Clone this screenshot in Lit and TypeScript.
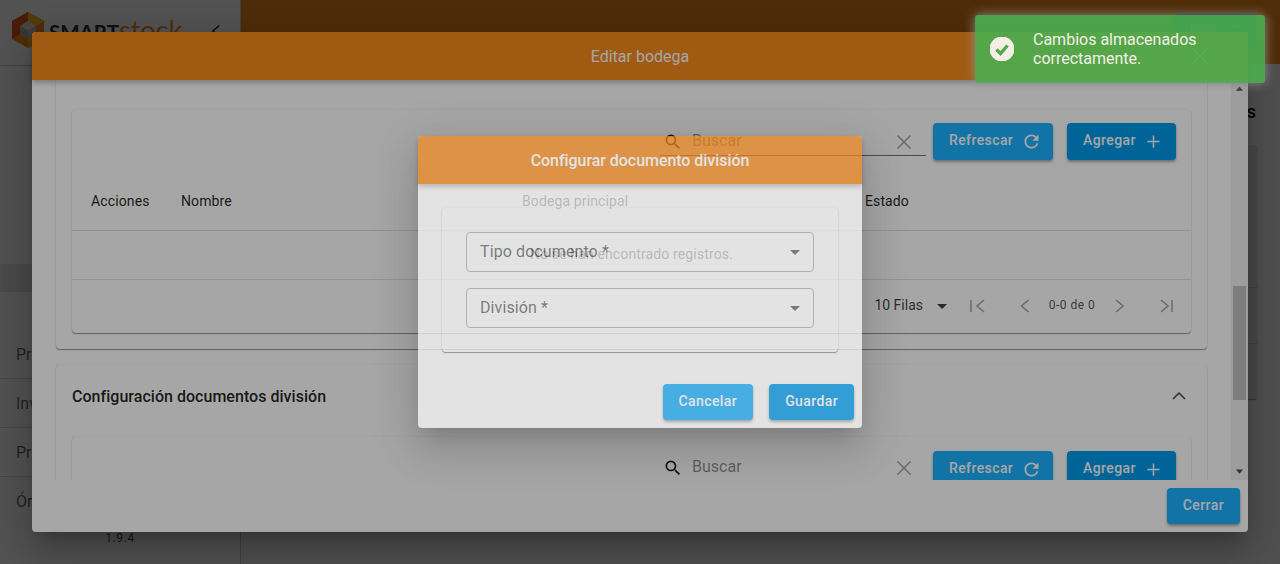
import { LitElement, html, css, svg } from 'lit';
import { customElement } from 'lit/decorators.js';

const icon = (body: unknown, size = 24, cls = '') => html`
  <svg class="icon ${cls}" width=${size} height=${size} viewBox="0 0 24 24">${body}</svg>
`;

const searchIcon = svg`<path fill="currentColor" d="M15.5 14h-.79l-.28-.27A6.471 6.471 0 0 0 16 9.5 6.5 6.5 0 1 0 9.5 16c1.61 0 3.09-.59 4.23-1.57l.27.28v.79l5 4.99L20.49 19l-4.99-5zm-6 0C7.01 14 5 11.99 5 9.5S7.01 5 9.5 5 14 7.01 14 9.5 11.99 14 9.5 14z"/>`;
const closeIcon = svg`<path fill="none" stroke="currentColor" stroke-width="1.3" d="M5.5 5.5l13 13M18.5 5.5l-13 13"/>`;
const refreshIcon = svg`<path fill="currentColor" d="M17.65 6.35A7.958 7.958 0 0 0 12 4c-4.42 0-7.99 3.58-7.99 8s3.57 8 7.99 8c3.73 0 6.84-2.55 7.73-6h-2.08A5.99 5.99 0 0 1 12 18c-3.31 0-6-2.69-6-6s2.69-6 6-6c1.66 0 3.14.69 4.22 1.78L13 11h7V4l-2.35 2.35z"/>`;
const plusIcon = svg`<path fill="none" stroke="currentColor" stroke-width="1.7" d="M12 5v14M5 12h14"/>`;
const firstIcon = svg`<path fill="none" stroke="currentColor" stroke-width="1.6" d="M6 6v12M19 6l-7 6 7 6"/>`;
const prevIcon = svg`<path fill="none" stroke="currentColor" stroke-width="1.6" d="M15.5 6l-7 6 7 6"/>`;
const nextIcon = svg`<path fill="none" stroke="currentColor" stroke-width="1.6" d="M9 6l7 6-7 6"/>`;
const lastIcon = svg`<path fill="none" stroke="currentColor" stroke-width="1.6" d="M17 6v12M6 6l7 6-7 6"/>`;
const chevronUp = svg`<path fill="none" stroke="currentColor" stroke-width="1.5" d="M6 15l6-6 6 6"/>`;
const caretDown = svg`<path fill="currentColor" d="M7 10l5 5 5-5z"/>`;

@customElement('app-root')
export class AppRoot extends LitElement {
  static styles = css`
    :host {
      display: block;
      position: relative;
      width: 1280px;
      height: 564px;
      overflow: hidden;
      font-family: 'Roboto', sans-serif;
      color: rgba(0, 0, 0, 0.87);
    }

    .icon {
      display: block;
      flex: none;
    }

    /* page behind the dialogs */
    .page {
      display: grid;
      grid-template-columns: 241px 1fr;
      height: 564px;
    }

    .sidebar {
      display: flex;
      flex-direction: column;
      background: #fff;
      border-right: 1px solid #ccc;
    }

    .brand {
      height: 66px;
      flex: none;
      box-sizing: border-box;
      padding: 12px 13px 0 12px;
      display: flex;
      gap: 5px;
      border-bottom: 1px solid #ccc;
      overflow: hidden;
    }

    .brand-text {
      font-family: 'Lato', sans-serif;
      font-size: 20.5px;
      font-weight: 700;
      line-height: 36px;
      color: #333;
      white-space: nowrap;
    }

    .brand-text span {
      font-size: 27px;
      font-weight: 400;
      color: #f68a1c;
    }

    .brand-chevron {
      margin: 8px 0 0 auto;
      color: #222;
    }

    .band {
      height: 28px;
      margin-top: 198px;
      background: #e6e6e6;
    }

    .menu {
      margin: 38px 0 0;
      list-style: none;
      padding: 0;
    }

    .menu li {
      height: 49px;
      box-sizing: border-box;
      padding: 0 16px;
      display: flex;
      align-items: center;
      font-size: 16px;
      color: rgba(0, 0, 0, 0.6);
      border-bottom: 1px solid #ddd;
    }

    .menu li:last-child {
      border-bottom: none;
    }

    .version {
      margin-top: 5px;
      text-align: center;
      font-size: 12px;
      letter-spacing: 0.6px;
      color: rgba(0, 0, 0, 0.75);
    }

    .main {
      background: #f8f8f8;
      display: flex;
      flex-direction: column;
    }

    .topbar {
      height: 64px;
      flex: none;
      background: #f68a1c;
      display: flex;
      justify-content: flex-end;
      box-sizing: border-box;
      padding: 14px 24px 0 0;
    }

    .account {
      width: 81px;
      height: 36px;
      box-sizing: border-box;
      padding: 10px 16px;
      display: flex;
      justify-content: space-between;
      border-radius: 4px;
      background: #009aeb;
    }

    .account i {
      width: 24px;
      height: 8px;
      background: #c8c8c8;
    }

    .account b {
      width: 8px;
      height: 4px;
      background: #c8c8c8;
    }

    .page-title {
      margin: 37px 24px 0 0;
      text-align: right;
      font-size: 18px;
      line-height: 22px;
      font-weight: 500;
      color: #000;
    }

    .page-card {
      margin: 22px 22px 0 18px;
      height: 254px;
      display: flex;
      flex-direction: column;
      justify-content: flex-end;
      background: #e4e4e4;
      border-radius: 4px;
      box-shadow: 0 2px 1px -1px rgba(0, 0, 0, 0.4);
    }

    .page-card div {
      height: 55px;
      border-top: 1px solid #c8c8c8;
    }

    /* dialogs */
    .backdrop {
      position: absolute;
      inset: 0;
      background: rgba(0, 0, 0, 0.5);
    }

    .backdrop.upper {
      background: rgba(0, 0, 0, 0.35);
    }

    .dialog {
      position: absolute;
      isolation: isolate;
      display: flex;
      flex-direction: column;
      background: #fff;
      border-radius: 4px;
      box-shadow: 0 11px 15px -7px rgba(0, 0, 0, 0.2),
        0 24px 38px 3px rgba(0, 0, 0, 0.14),
        0 9px 46px 8px rgba(0, 0, 0, 0.12);
    }

    .edit {
      left: 32px;
      top: 32px;
      width: 1216px;
      height: 500px;
    }

    .config {
      left: 418px;
      top: 136px;
      width: 444px;
      height: 292px;
      opacity: 0.69;
    }

    .dialog-head {
      position: relative;
      z-index: 1;
      height: 48px;
      flex: none;
      display: flex;
      align-items: center;
      justify-content: center;
      background: #f68a1c;
      color: #fff;
      font-size: 16px;
      border-radius: 4px 4px 0 0;
      box-shadow: 0 3px 5px rgba(0, 0, 0, 0.25);
    }

    .config .dialog-head {
      font-weight: 500;
      letter-spacing: -0.05px;
    }

    .dialog-close {
      position: absolute;
      right: 36px;
      top: 12px;
      color: #fff;
    }

    .dialog-body {
      flex: 1;
      min-height: 0;
      display: flex;
      overflow: hidden;
    }

    .scroll-content {
      flex: 1;
      min-width: 0;
      box-sizing: border-box;
      padding: 0 24px;
    }

    .scrollbar {
      width: 17px;
      flex: none;
      display: flex;
      flex-direction: column;
      align-items: center;
      background: #f1f1f1;
      color: #505050;
    }

    .scrollbar .track {
      flex: 1;
      width: 100%;
      box-sizing: border-box;
      padding: 189px 2px 0 2px;
    }

    .scrollbar .thumb {
      height: 114px;
      background: #c1c1c1;
    }

    .dialog-foot {
      flex: none;
      display: flex;
      justify-content: flex-end;
      padding: 8px;
    }

    .section {
      background: #fff;
      border-radius: 4px;
      padding: 0 16px 16px;
      box-shadow: 0 1px 1px rgba(0, 0, 0, 0.4), 0 0 2px rgba(0, 0, 0, 0.1);
      margin-bottom: 16px;
    }

    .section.cut {
      padding-top: 30px;
      border-radius: 0 0 4px 4px;
    }

    .section-head {
      height: 62px;
      margin-bottom: 10px;
      display: flex;
      align-items: center;
      justify-content: space-between;
      font-size: 16px;
      font-weight: 500;
      letter-spacing: 0.03px;
    }

    .section-head .icon {
      color: #444;
    }

    .card {
      background: #fff;
      border-radius: 4px;
      box-shadow: 0 1px 1px rgba(0, 0, 0, 0.4), 0 0 2px rgba(0, 0, 0, 0.1);
    }

    .toolbar {
      height: 62px;
      box-sizing: border-box;
      padding: 13px 15px 0 0;
      display: flex;
      justify-content: flex-end;
      align-items: flex-start;
      gap: 14px;
    }

    .section-head + .card .toolbar {
      padding-top: 14px;
    }

    .section-head + .card .search {
      margin-top: -2px;
    }

    .search {
      width: 266px;
      height: 33px;
      margin-right: -7px;
      box-sizing: border-box;
      display: flex;
      align-items: center;
      padding: 2px 10px 0 3px;
      border-bottom: 1px solid rgba(0, 0, 0, 0.55);
      font-size: 16px;
      color: rgba(0, 0, 0, 0.45);
    }

    .search .lens {
      color: #222;
      margin: 4px 9px 0 0;
    }

    .search .clear {
      margin: 4px 0 0 auto;
      color: rgba(0, 0, 0, 0.4);
    }

    button {
      height: 36px;
      border: none;
      border-radius: 4px;
      padding: 0 16px 2px;
      display: inline-flex;
      align-items: center;
      font: 500 14px 'Roboto', sans-serif;
      letter-spacing: 0.4px;
      color: #fff;
      background: #009aeb;
      box-shadow: 0 2px 3px rgba(0, 0, 0, 0.35);
    }

    button.light {
      background: #1cb2ff;
    }

    .toolbar button {
      height: 37px;
      padding-right: 4px;
      padding-bottom: 3px;
    }

    .toolbar button .icon {
      margin: 3px 0 0 7.5px;
    }

    .refresh {
      width: 120px;
    }

    .add {
      width: 109px;
    }

    .table-head {
      height: 58px;
      display: grid;
      grid-template-columns: 90px 341px 343px 1fr;
      align-items: center;
      padding-left: 19px;
      font-size: 14px;
      letter-spacing: 0.12px;
      border-bottom: 1px solid rgba(0, 0, 0, 0.12);
    }

    .table-empty {
      height: 49px;
      box-sizing: border-box;
      padding-bottom: 2px;
      display: flex;
      align-items: center;
      justify-content: center;
      font-size: 14px;
      letter-spacing: 0.13px;
      color: rgba(0, 0, 0, 0.87);
      border-bottom: 1px solid rgba(0, 0, 0, 0.12);
    }

    .pager {
      height: 53px;
      box-sizing: border-box;
      padding: 0 12px 2px 0;
      display: flex;
      align-items: center;
      justify-content: flex-end;
      color: rgba(0, 0, 0, 0.35);
    }

    .pager .rows {
      display: flex;
      align-items: center;
      font-size: 14px;
      color: rgba(0, 0, 0, 0.75);
      margin: -1px 19px 0 0;
    }

    .pager .rows .icon {
      margin: 2px -8px 0 7px;
    }

    .pager .range {
      width: 48px;
      margin: -1px 11px 0;
      text-align: center;
      font-size: 12px;
      letter-spacing: 0.5px;
      white-space: nowrap;
      color: rgba(0, 0, 0, 0.7);
    }

    .pager .gap {
      width: 24px;
    }

    .form-body {
      flex: 1;
      padding: 24px 24px 0;
    }

    .form-card {
      display: flex;
      flex-direction: column;
      gap: 16px;
      padding: 24px;
      background: #fff;
      border-radius: 4px;
      box-shadow: 0 1px 1px rgba(0, 0, 0, 0.45), 0 0 2px rgba(0, 0, 0, 0.1);
    }

    .field {
      height: 40px;
      box-sizing: border-box;
      display: flex;
      align-items: center;
      justify-content: space-between;
      padding: 0 6px 0 13px;
      border: 1px solid rgba(0, 0, 0, 0.3);
      border-radius: 4px;
      font-size: 16px;
      letter-spacing: 0.1px;
      color: rgba(0, 0, 0, 0.62);
    }

    .field .text {
      margin-top: -2px;
    }

    .field .icon {
      color: rgba(0, 0, 0, 0.6);
    }

    .form-foot {
      gap: 16px;
    }

    /* toast */
    .toast {
      position: absolute;
      left: 975px;
      top: 15px;
      width: 290px;
      height: 68px;
      box-sizing: border-box;
      display: flex;
      align-items: center;
      gap: 19px;
      padding: 0 15px;
      background: #4caf50;
      color: #fff;
      border-radius: 3px;
      opacity: 0.9;
      font-size: 16px;
      line-height: 19px;
      box-shadow: 0 0 12px #999;
    }
  `;

  private _menu = ['Productos', 'Inventario', 'Proveedores', 'Órdenes'];

  private _logo() {
    return html`
      <svg class="icon" width="32" height="36" viewBox="0 0 32 36">
        <polygon fill="#f68a1c" points="16,0 32,9 32,27 16,36 0,27 0,9" />
        <polygon fill="#e2561d" points="16,0 0,9 8,14 16,9" />
        <polygon fill="#fbb91f" points="16,0 32,9 24,14 16,9" />
        <polygon fill="#e2561d" points="0,27 8,22 8,14 0,9" />
        <polygon fill="#fbb91f" points="32,27 24,22 16,27 16,36" />
        <polygon fill="#d8d8d8" points="16,9 24,14 16,19 8,14" />
        <polygon fill="#aaa" points="8,14 16,19 16,27 8,22" />
        <polygon fill="#bcbcbc" points="24,14 24,22 16,27 16,19" />
      </svg>
    `;
  }

  private _sidebar() {
    return html`
      <aside class="sidebar">
        <div class="brand">
          ${this._logo()}
          <div class="brand-text">SMART<span>stock</span></div>
          <div class="brand-chevron">${icon(prevIcon, 22)}</div>
        </div>
        <div class="band"></div>
        <ul class="menu">
          ${this._menu.map((m) => html`<li>${m}</li>`)}
        </ul>
        <div class="version">1.9.4</div>
      </aside>
    `;
  }

  private _main() {
    return html`
      <main class="main">
        <div class="topbar">
          <div class="account"><i></i><b></b></div>
        </div>
        <div class="page-title">Bodegas</div>
        <div class="page-card"><div></div><div></div></div>
      </main>
    `;
  }

  private _toolbar() {
    return html`
      <div class="toolbar">
        <div class="search">
          ${icon(searchIcon, 20, 'lens')}
          <span>Buscar</span>
          ${icon(closeIcon, 24, 'clear')}
        </div>
        <button class="light refresh">Refrescar ${icon(refreshIcon, 21)}</button>
        <button class="add">Agregar ${icon(plusIcon, 21)}</button>
      </div>
    `;
  }

  private _table() {
    return html`
      <div class="card">
        ${this._toolbar()}
        <div class="table-head">
          <span>Acciones</span>
          <span>Nombre</span>
          <span>Bodega principal</span>
          <span>Estado</span>
        </div>
        <div class="table-empty">No se han encontrado registros.</div>
        <div class="pager">
          <div class="rows">10 Filas ${icon(caretDown)}</div>
          ${icon(firstIcon)}
          <span class="gap"></span>
          ${icon(prevIcon)}
          <span class="range">0-0 de 0</span>
          ${icon(nextIcon)}
          <span class="gap"></span>
          ${icon(lastIcon)}
        </div>
      </div>
    `;
  }

  private _editDialog() {
    return html`
      <section class="dialog edit">
        <header class="dialog-head">
          Editar bodega
          <span class="dialog-close">${icon(closeIcon)}</span>
        </header>
        <div class="dialog-body">
          <div class="scroll-content">
            <div class="section cut">${this._table()}</div>
            <div class="section">
              <div class="section-head">
                Configuración documentos división ${icon(chevronUp)}
              </div>
              ${this._table()}
            </div>
          </div>
          <div class="scrollbar">
            ${icon(svg`<path fill="currentColor" d="M7 15l5-6 5 6z"/>`, 17)}
            <div class="track"><div class="thumb"></div></div>
            ${icon(svg`<path fill="currentColor" d="M7 9l5 6 5-6z"/>`, 17)}
          </div>
        </div>
        <footer class="dialog-foot">
          <button class="light">Cerrar</button>
        </footer>
      </section>
    `;
  }

  private _configDialog() {
    return html`
      <section class="dialog config">
        <header class="dialog-head">Configurar documento división</header>
        <div class="form-body">
          <div class="form-card">
            <div class="field">
              <span class="text">Tipo documento *</span>${icon(caretDown)}
            </div>
            <div class="field">
              <span class="text">División *</span>${icon(caretDown)}
            </div>
          </div>
        </div>
        <footer class="dialog-foot form-foot">
          <button class="light">Cancelar</button>
          <button>Guardar</button>
        </footer>
      </section>
    `;
  }

  render() {
    return html`
      <div class="page">${this._sidebar()} ${this._main()}</div>
      <div class="backdrop"></div>
      ${this._editDialog()}
      <div class="backdrop upper"></div>
      ${this._configDialog()}
      <div class="toast">
        <svg class="icon" width="24" height="24" viewBox="0 0 24 24">
          <circle cx="12" cy="12" r="12.5" fill="#fff" />
          <path fill="none" stroke="#4caf50" stroke-width="3.4" d="M6.5 12.5l4 4 7-8" />
        </svg>
        <span class="text">Cambios almacenados correctamente.</span>
      </div>
    `;
  }
}
